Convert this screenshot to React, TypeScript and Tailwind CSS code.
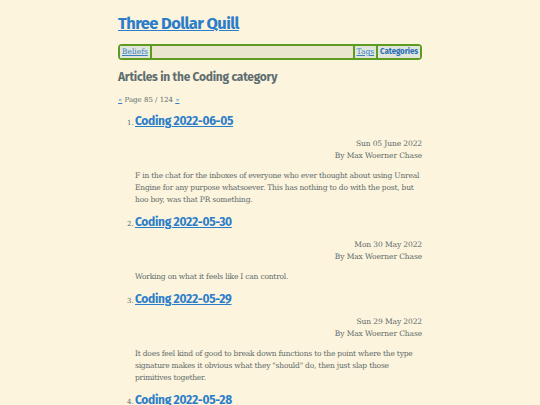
const articles = [
  {
    title: "Coding 2022-06-05",
    date: "Sun 05 June 2022",
    summary:
      "F in the chat for the inboxes of everyone who ever thought about using Unreal Engine for any purpose whatsoever. This has nothing to do with the post, but hoo boy, was that PR something.",
  },
  {
    title: "Coding 2022-05-30",
    date: "Mon 30 May 2022",
    summary: "Working on what it feels like I can control.",
  },
  {
    title: "Coding 2022-05-29",
    date: "Sun 29 May 2022",
    summary:
      'It does feel kind of good to break down functions to the point where the type signature makes it obvious what they "should" do, then just slap those primitives together.',
  },
  {
    title: "Coding 2022-05-28",
    date: "Sat 28 May 2022",
    summary: "Getting a little further along.",
  },
];

const sans = "font-['Fira_Sans','Roboto','Liberation_Sans',sans-serif]";
const serif = "font-['DejaVu_Serif','Liberation_Serif',serif]";

export default function App() {
  return (
    <div className="h-[405px] overflow-hidden bg-[#fcf4dd] text-[#5e6b6b]">
      <div className="mx-auto w-[304px] pt-[12px]">
        <h1 className={`${sans} text-[16.5px] font-bold leading-[24px] tracking-[-0.6px] text-[#2b7dca] underline`}>
          Three Dollar Quill
        </h1>

        <nav className="mt-[8px] flex h-[16px] items-stretch rounded-[4px] border-2 border-[#5e9c21] bg-[#ebe4cf] text-[7.5px] leading-[12px]">
          <a className={`${serif} border-r-2 border-[#5e9c21] bg-[#e0e6dc] px-[2px] text-[#3a7fc4] underline`}>
            Beliefs
          </a>
          <div className="flex-1" />
          <a className={`${serif} border-l-2 border-[#5e9c21] bg-[#e0e6dc] px-[2px] text-[#3a7fc4] underline`}>
            Tags
          </a>
          <a className={`${sans} border-l-2 border-[#5e9c21] bg-[#e0e6dc] px-[2px] text-[8px] font-bold tracking-[-0.1px] text-[#2a6fb4]`}>
            Categories
          </a>
        </nav>

        <h2 className={`${sans} mt-[8px] text-[12px] font-bold leading-[18px] tracking-[-0.25px] text-[#5d6d70]`}>
          Articles in the Coding category
        </h2>

        <p className={`${serif} mt-[8px] text-[7px] leading-[12px]`}>
          <a className="text-[#3a7fc4] underline">«</a> Page 85 / 124{" "}
          <a className="text-[#3a7fc4] underline">»</a>
        </p>

        <ol className="mt-[6px] pl-[17px]">
          {articles.map((a, i) => (
            <li key={a.title} className="mb-[7px]">
              <div className="flex items-baseline">
                <span className={`${serif} w-[0px] -translate-x-[8px] whitespace-nowrap text-[7px]`}>
                  {i + 1}.
                </span>
                <a className={`${sans} text-[12px] font-bold leading-[18px] tracking-[-0.3px] text-[#2b7dca] underline`}>
                  {a.title}
                </a>
              </div>
              <div className={`${serif} mt-[8px] text-right text-[7.5px] leading-[12px] tracking-[-0.1px]`}>
                <div>{a.date}</div>
                <div>By Max Woerner Chase</div>
              </div>
              <p className={`${serif} mt-[8px] text-[7.5px] leading-[12px] tracking-[-0.2px]`}>{a.summary}</p>
            </li>
          ))}
        </ol>
      </div>
    </div>
  );
}
